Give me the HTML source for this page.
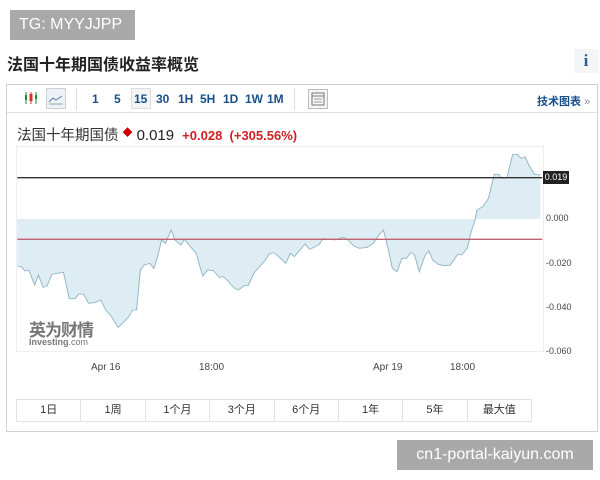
<!DOCTYPE html>
<html><head><meta charset="utf-8"><style>
*{margin:0;padding:0;box-sizing:border-box}
body{width:600px;height:480px;background:#fff;font-family:"Liberation Sans","Noto Sans CJK SC",sans-serif;position:relative;overflow:hidden;color:#333}
.abs{position:absolute}
.tg{left:10px;top:10px;width:125px;height:30px;background:#a9a9a9;color:#fff;font-size:16px;line-height:30px;padding-left:9px}
.title{left:7px;top:51px;font-size:16px;font-weight:bold;color:#222}
.info{left:574px;top:49px;width:24px;height:24px;background:#f3f5f7;color:#2a5d9b;font-family:"Liberation Serif",serif;font-weight:bold;font-size:17px;text-align:center;line-height:24px}
.box{left:6px;top:84px;width:592px;height:348px;border:1px solid #d2d2d2}
.tb{left:7px;top:85px;width:590px;height:28px;border-bottom:1px solid #e2e2e2}
.b{position:absolute;top:92px;font-size:12px;font-weight:bold;color:#1a4f8a}
.sep{position:absolute;top:88px;width:1px;height:22px;background:#ddd}
.q{left:17px;top:124px;font-size:14.5px}
.plot{left:16px;top:146px;width:528px;height:206px;border:1px solid #eee}
.yl{position:absolute;left:546px;font-size:9px;color:#444}
.xl{position:absolute;top:362px;font-size:10px;color:#444}
.rng{left:16px;top:399px;width:516px;height:23px;border:1px solid #e2e2e2;display:flex}
.rng div{flex:1;border-right:1px solid #e2e2e2;font-size:11px;text-align:center;line-height:21px;color:#333}
.rng div:last-child{border-right:none}
.site{left:397px;top:440px;width:196px;height:30px;background:#a9a9a9;color:#fff;font-size:16px;line-height:30px;text-align:center}
</style></head><body>
<div class="abs tg">TG: MYYJJPP</div>
<div class="abs title">法国十年期国债收益率概览</div>
<div class="abs info">i</div>
<div class="abs box"></div>
<div class="abs tb"></div>
<svg class="abs" style="left:24px;top:91px" width="14" height="14" viewBox="0 0 14 14"><g stroke-width="1"><line x1="2" y1="1" x2="2" y2="13" stroke="#2a8a2a"/><rect x="1" y="4" width="2" height="5" fill="#2a8a2a"/><line x1="7" y1="1" x2="7" y2="13" stroke="#c33"/><rect x="5.5" y="3" width="3" height="7" fill="#c33"/><line x1="12" y1="1" x2="12" y2="13" stroke="#2a8a2a"/><rect x="11" y="4" width="2" height="4" fill="#2a8a2a"/></g></svg>
<div class="abs" style="left:46px;top:88px;width:20px;height:21px;border:1px solid #ccd;background:#eef1f5"></div>
<svg class="abs" style="left:48px;top:92px" width="16" height="14"><path d="M1 10 L5 6 L8 8 L14 4" stroke="#5a7fae" fill="none"/><line x1="1" y1="12" x2="15" y2="12" stroke="#8aa"/></svg>
<div class="sep" style="left:76px"></div>
<div class="b" style="left:92px">1</div>
<div class="b" style="left:114px">5</div>
<div class="abs" style="left:131px;top:88px;width:20px;height:21px;border:1px solid #ddd;background:#f2f4f6"></div>
<div class="b" style="left:134px">15</div>
<div class="b" style="left:156px">30</div>
<div class="b" style="left:178px">1H</div>
<div class="b" style="left:200px">5H</div>
<div class="b" style="left:223px">1D</div>
<div class="b" style="left:245px">1W</div>
<div class="b" style="left:267px">1M</div>
<div class="sep" style="left:294px"></div>
<div class="abs" style="left:308px;top:89px;width:20px;height:20px;border:1px solid #bbb;background:#f6f6f6"></div>
<svg class="abs" style="left:311px;top:92px" width="14" height="14"><rect x="1" y="1" width="12" height="12" fill="none" stroke="#777"/><line x1="1" y1="4" x2="13" y2="4" stroke="#777"/><line x1="3" y1="7" x2="11" y2="7" stroke="#999"/><line x1="3" y1="10" x2="11" y2="10" stroke="#999"/></svg>
<div class="b" style="left:537px;top:93px;font-size:11px">技术图表 <span style="color:#888;font-weight:normal">»</span></div>
<div class="abs q">法国十年期国债 <span style="color:#c00;font-size:10px;vertical-align:top">◆</span> <span style="color:#222;font-size:15px">0.019</span> &nbsp;<span style="color:#c22;font-weight:bold;font-size:13px">+0.028 &nbsp;(+305.56%)</span></div>
<div class="abs plot"></div>
<svg class="abs" style="left:0;top:140px" width="600" height="240" viewBox="0 0 1560 720" preserveAspectRatio="none">
<polygon fill="#deedf3" points="45,237 45,378 55,380 65,393 75,390 90,435 100,405 112,442 122,438 135,403 150,400 165,397 180,476 195,476 205,462 218,463 230,490 245,488 262,480 275,510 290,530 307,562 320,548 335,530 345,510 355,510 365,390 375,375 390,370 400,385 410,350 420,300 430,310 445,270 455,300 470,315 480,298 495,320 510,340 527,408 540,390 555,392 570,412 580,410 590,420 610,445 620,450 635,437 645,437 660,400 675,380 690,360 700,342 712,338 725,350 743,370 755,340 765,350 780,330 793,312 805,328 820,320 830,313 840,296 860,297 870,300 880,296 895,292 905,300 920,318 935,325 955,322 970,310 985,285 997,270 1010,330 1020,385 1032,395 1045,355 1057,355 1068,337 1078,345 1090,395 1105,347 1115,333 1125,360 1140,373 1155,377 1170,376 1180,360 1190,343 1200,345 1215,325 1225,275 1235,240 1240,210 1255,200 1270,175 1285,103 1297,103 1305,115 1318,113 1333,43 1345,43 1355,55 1365,50 1375,75 1390,103 1405,105 1405,237"/>
<polyline fill="none" stroke="#8fb4c8" stroke-width="2.5" points="45,378 55,380 65,393 75,390 90,435 100,405 112,442 122,438 135,403 150,400 165,397 180,476 195,476 205,462 218,463 230,490 245,488 262,480 275,510 290,530 307,562 320,548 335,530 345,510 355,510 365,390 375,375 390,370 400,385 410,350 420,300 430,310 445,270 455,300 470,315 480,298 495,320 510,340 527,408 540,390 555,392 570,412 580,410 590,420 610,445 620,450 635,437 645,437 660,400 675,380 690,360 700,342 712,338 725,350 743,370 755,340 765,350 780,330 793,312 805,328 820,320 830,313 840,296 860,297 870,300 880,296 895,292 905,300 920,318 935,325 955,322 970,310 985,285 997,270 1010,330 1020,385 1032,395 1045,355 1057,355 1068,337 1078,345 1090,395 1105,347 1115,333 1125,360 1140,373 1155,377 1170,376 1180,360 1190,343 1200,345 1215,325 1225,275 1235,240 1240,210 1255,200 1270,175 1285,103 1297,103 1305,115 1318,113 1333,43 1345,43 1355,55 1365,50 1375,75 1390,103 1405,105"/>
<line x1="45" y1="113" x2="1410" y2="113" stroke="#333" stroke-width="4"/>
<line x1="45" y1="298" x2="1410" y2="298" stroke="#c06070" stroke-width="4"/>
</svg>
<div class="abs" style="left:543px;top:171px;width:26px;height:13px;background:#222;color:#fff;font-size:9px;line-height:13px;text-align:center">0.019</div>
<div class="yl" style="top:213px">0.000</div>
<div class="yl" style="top:258px">-0.020</div>
<div class="yl" style="top:302px">-0.040</div>
<div class="yl" style="top:346px">-0.060</div>
<div class="xl" style="left:91px">Apr 16</div>
<div class="xl" style="left:199px">18:00</div>
<div class="xl" style="left:373px">Apr 19</div>
<div class="xl" style="left:450px">18:00</div>
<div class="abs" style="left:29px;top:316px;font-size:17px;font-weight:bold;color:#777;letter-spacing:-1px">英为财情</div>
<div class="abs" style="left:29px;top:337px;font-size:9px;font-weight:bold;color:#777">Investing<span style="font-weight:normal">.com</span></div>
<div class="abs rng"><div>1日</div><div>1周</div><div>1个月</div><div>3个月</div><div>6个月</div><div>1年</div><div>5年</div><div>最大值</div></div>
<div class="abs site">cn1-portal-kaiyun.com</div>
</body></html>
